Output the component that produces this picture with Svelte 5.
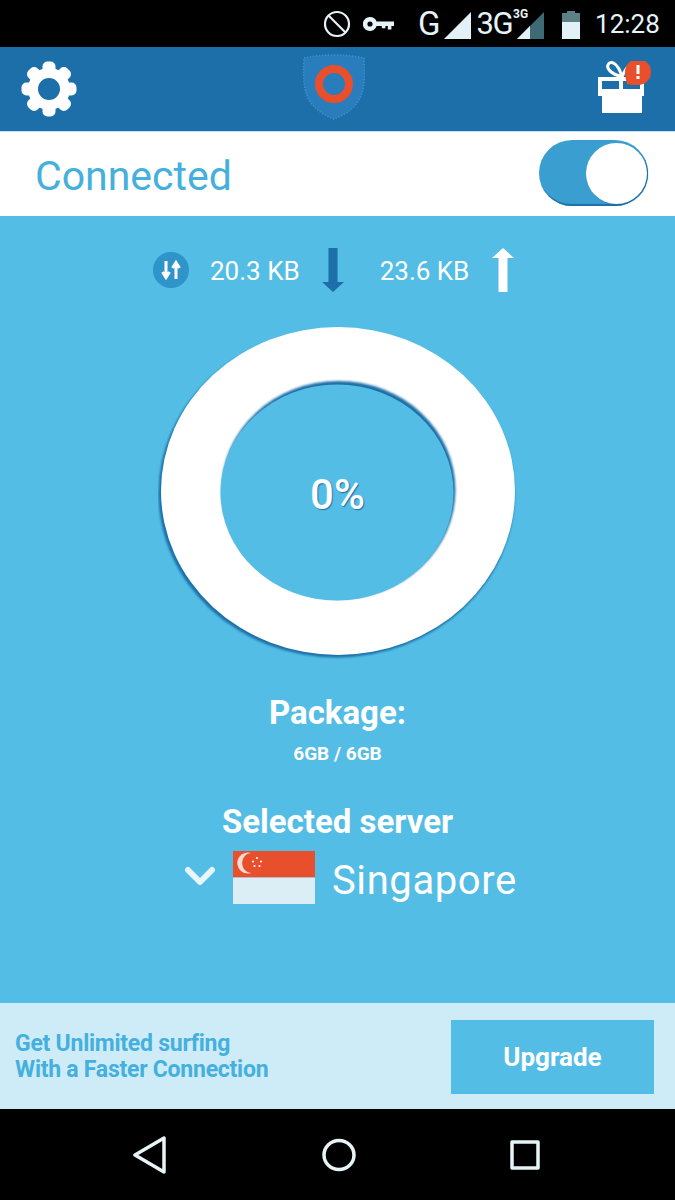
<script>
  const promo = ['Get Unlimited surfing', 'With a Faster Connection']
  const stars = [[24, 7], [20, 10.5], [28, 10.5], [21.5, 15], [26.5, 15]]

  // gear teeth, drawn round the centre of a 56 box
  const teeth = [0, 45, 90, 135, 180, 225, 270, 315]
</script>

<div class="phone">
  <div class="status">
    <svg class="no" width="28" height="28" viewBox="0 0 28 28" fill="none" stroke="#e6f4f8" stroke-width="2.2">
      <circle cx="14" cy="14" r="12" />
      <path d="M5.5 5.5l17 17" />
    </svg>
    <svg class="key" width="31" height="16" viewBox="0 0 31 16" fill="#e6f4f8">
      <path fill-rule="evenodd" d="M7 1a7 7 0 0 1 6.6 4.5H31v4.4h-2.6v3.6h-3.6V9.9h-2.4v2.4h-3.6V9.9h-5.2A7 7 0 1 1 7 1zm0 4.4a2.6 2.6 0 1 0 0 5.2 2.6 2.6 0 0 0 0-5.2z" />
    </svg>
    <span class="net g">G</span>
    <svg class="tri" width="27" height="27" viewBox="0 0 27 27"><path d="M0 27L27 0v27z" fill="#e2f1f6" /></svg>
    <span class="net three">3G</span>
    <span class="sup">3G</span>
    <svg class="tri two" width="27" height="27" viewBox="0 0 27 27">
      <path d="M0 27L27 0v27z" fill="#3d6a75" />
      <path d="M0 27L13 14v13z" fill="#e2f1f6" />
    </svg>
    <svg class="batt" width="18" height="28" viewBox="0 0 18 28">
      <path d="M5 0h8v2h5v9H0V2h5z" fill="#5d8087" />
      <path d="M0 11h18v17H0z" fill="#e2f1f6" />
    </svg>
    <span class="time">12:28</span>
  </div>

  <header>
    <svg class="gear" width="56" height="56" viewBox="0 0 56 56">
      <g fill="#fff">
        {#each teeth as a}
          <rect x="21.5" y="0.5" width="13" height="14" rx="5" transform="rotate({a} 28 28)" />
        {/each}
      </g>
      <circle cx="28" cy="28" r="16" fill="none" stroke="#fff" stroke-width="10" />
    </svg>
    <svg class="logo" width="64" height="66" viewBox="0 0 64 66">
      <path d="M2 4C20 0 44 0 62 4c1 20 1 34-7 45-6 8-15 13-23 16C24 62 15 57 9 49 1 38 1 24 2 4z" fill="#2a7dbd" stroke="#3f8fc9" stroke-width="1.5" stroke-dasharray="1.5 1.5" />
      <circle cx="32" cy="30" r="15" fill="none" stroke="#e84f2c" stroke-width="8" />
    </svg>
    <svg class="gift" width="56" height="54" viewBox="0 0 56 54">
      <path d="M26 16C17 14 10 8 12 4c2-5 10-3 14 12zM26 16c2-5 4-10 8-12" fill="none" stroke="#fff" stroke-width="3" />
      <path fill-rule="evenodd" d="M2 16h46v19H2zM6 20v8h17v-8zM27 20v8h17v-8z" fill="#fff" />
      <path d="M6 35h40v17H6z" fill="#fff" />
      <path d="M31 23c-1-4-2-8-2-12a13 13 0 1 1 13 13c-4 0-8 0-11-1z" fill="#e84f2c" />
      <path d="M40.500 4h3v9h-3zM40.500 15h3v3h-3z" fill="#fff" />
    </svg>
  </header>

  <div class="connected">
    <span>Connected</span>
    <div class="toggle"><div class="thumb"></div></div>
  </div>

  <main>
    <div class="stats">
      <svg class="swap" width="36" height="36" viewBox="0 0 36 36">
        <circle cx="18" cy="18" r="18" fill="#2f94c9" />
        <path d="M13 9v14M9.500 20l3.500 5.500 3.500-5.500M23 27V13M19.500 16l3.500-5.500 3.500 5.500" fill="none" stroke="#fff" stroke-width="3" />
      </svg>
      <span class="kb first">20.3 KB</span>
      <svg class="arrow down" width="22" height="44" viewBox="0 0 22 44">
        <path d="M6.500 0h9v34H22L11 44 0 34h6.500z" fill="#1c6fa8" />
      </svg>
      <span class="kb second">23.6 KB</span>
      <svg class="arrow up" width="22" height="44" viewBox="0 0 22 44">
        <path d="M6.500 44h9V10H22L11 0 0 10h6.500z" fill="#fff" />
      </svg>
    </div>

    <div class="ring">
      <svg width="360" height="334" viewBox="0 0 360 334">
        <defs>
          <filter id="soft" x="-5%" y="-5%" width="110%" height="110%"><feGaussianBlur stdDeviation="0.8" /></filter>
        </defs>
        <ellipse cx="178.500" cy="168.500" rx="178" ry="164" fill="#1c6fa8" filter="url(#soft)" />
        <ellipse cx="180" cy="166" rx="177" ry="164" fill="#fff" />
        <ellipse cx="180.500" cy="165" rx="117" ry="109" fill="#1c6fa8" filter="url(#soft)" />
        <ellipse cx="179" cy="167.500" rx="116.500" ry="108" fill="#53bde5" />
      </svg>
      <span class="pct">0%</span>
    </div>

    <div class="package">Package:</div>
    <div class="quota">6GB / 6GB</div>

    <div class="selected">Selected server</div>
    <div class="server">
      <svg class="chev" width="32" height="20" viewBox="0 0 32 20">
        <path d="M4 4l12 12L28 4" fill="none" stroke="#e8f6fb" stroke-width="6" stroke-linecap="round" stroke-linejoin="round" />
      </svg>
      <svg class="flag" width="82" height="53" viewBox="0 0 82 53">
        <rect width="82" height="26.500" fill="#e84f2c" />
        <rect y="26.500" width="82" height="26.500" fill="#dceef5" />
        <path d="M18 2a10.500 10.500 0 1 0 0 20 8 9 0 1 1 0-20z" fill="#f6dcd4" />
        {#each stars as s}
          <circle cx={s[0]} cy={s[1]} r="1.100" fill="#fff" />
        {/each}
      </svg>
      <span>Singapore</span>
    </div>
  </main>

  <div class="promo">
    <div class="pitch">
      {#each promo as line}
        <div>{line}</div>
      {/each}
    </div>
    <button>Upgrade</button>
  </div>

  <nav>
    <svg width="34" height="38" viewBox="0 0 34 38" fill="none" stroke="#e6f4f8" stroke-width="3.500" stroke-linejoin="round">
      <path d="M31 2v34L2 19z" />
    </svg>
    <svg width="34" height="34" viewBox="0 0 34 34" fill="none" stroke="#e6f4f8" stroke-width="3.500">
      <ellipse cx="17" cy="17" rx="15" ry="14.500" />
    </svg>
    <svg width="30" height="30" viewBox="0 0 30 30" fill="none" stroke="#e6f4f8" stroke-width="3.500" stroke-linejoin="round">
      <rect x="2" y="2" width="26" height="26" />
    </svg>
  </nav>
</div>

<style>
  :global(body) {
    background: #000;
  }

  .phone {
    width: 675px;
    height: 1200px;
    display: flex;
    flex-direction: column;
    font-family: Roboto, "Liberation Sans", sans-serif;
    overflow: hidden;
  }

  .status {
    height: 47px;
    background: #000;
    color: #e6f4f8;
    display: flex;
    align-items: center;
    padding-left: 323px;
    flex: none;
  }

  .status svg {
    flex: none;
  }

  .key {
    margin-left: 12px;
  }

  .net {
    font-size: 33px;
    line-height: 47px;
  }

  .g {
    margin-left: 24px;
  }

  .three {
    margin-left: 5px;
    font-size: 31px;
    letter-spacing: -1.5px;
  }

  .sup {
    font-size: 12px;
    font-weight: 700;
    margin: -20px 0 0 1px;
    width: 16px;
  }

  .status .tri {
    margin: 3px 0 0 4px;
  }

  .status .two {
    margin-left: -12px;
  }

  .status .batt {
    margin: 2px 0 0 18px;
  }

  .time {
    font-size: 26px;
    margin-left: 15px;
  }

  header {
    height: 84px;
    background: #1c6fa8;
    flex: none;
    display: flex;
    align-items: center;
    justify-content: space-between;
    padding: 0 23px 0 21px;
    position: relative;
  }

  .logo {
    margin: 0 6px 5px 0;
  }

  .gift {
    margin-bottom: 2px;
  }

  .connected {
    height: 84px;
    background: #fff;
    border-top: 1px solid #bfe6f5;
    flex: none;
    display: flex;
    align-items: center;
    justify-content: space-between;
    padding: 0 27px 0 35px;
    color: #45b0dd;
    font-size: 41px;
  }

  .connected span {
    margin-top: 3px;
  }

  .toggle {
    width: 109px;
    height: 66px;
    box-sizing: border-box;
    background: #3a9fd0;
    border-radius: 33px;
    display: flex;
    align-items: center;
    justify-content: flex-end;
    padding-right: 1px;
    box-shadow: inset -1px -2px 1px #1c6fa8;
    margin-bottom: 2px;
  }

  .thumb {
    width: 61px;
    height: 61px;
    border-radius: 50%;
    background: #fff;
    box-shadow: 1px 1px 1px #1c6fa8;
  }

  main {
    flex: 1;
    background: #53bde5;
    color: #fff;
    display: flex;
    flex-direction: column;
    align-items: center;
  }

  .stats {
    display: flex;
    align-items: center;
    width: 675px;
    height: 44px;
    margin-top: 32px;
    padding-left: 153px;
    box-sizing: border-box;
  }

  .swap {
    flex: none;
  }

  .kb {
    font-size: 26px;
    white-space: nowrap;
    margin-top: 2px;
  }

  .first {
    margin-left: 21px;
  }

  .down {
    margin-left: 22px;
  }

  .second {
    margin-left: 36px;
  }

  .up {
    margin-left: 23px;
  }

  .ring {
    position: relative;
    width: 360px;
    height: 334px;
    margin-top: 33px;
  }

  .ring svg {
    display: block;
  }

  .pct {
    position: absolute;
    left: 0;
    right: 0;
    top: 147px;
    line-height: 46px;
    text-align: center;
    font-size: 42px;
    font-weight: 500;
    text-shadow: 1px 1px 1px #1c6fa8;
  }

  .package {
    margin-top: 36px;
    font-size: 33px;
    font-weight: 700;
    line-height: 36px;
  }

  .quota {
    margin-top: 13px;
    font-size: 19px;
    font-weight: 700;
    line-height: 20px;
  }

  .selected {
    margin-top: 40px;
    font-size: 33px;
    font-weight: 700;
    line-height: 36px;
  }

  .server {
    display: flex;
    align-items: center;
    width: 675px;
    box-sizing: border-box;
    padding-left: 184px;
    margin-top: 11px;
    font-size: 40px;
  }

  .chev {
    flex: none;
    margin-bottom: 4px;
  }

  .flag {
    flex: none;
    margin-left: 17px;
  }

  .server span {
    margin: 6px 0 0 17px;
    letter-spacing: 0.6px;
  }

  .promo {
    height: 106px;
    flex: none;
    background: #cdecf8;
    display: flex;
    align-items: center;
    justify-content: space-between;
    padding: 0 21px 0 15px;
  }

  .pitch {
    color: #45b0dd;
    font-size: 23px;
    font-weight: 700;
    line-height: 26px;
    letter-spacing: -0.25px;
    margin-top: 2px;
  }

  button {
    width: 203px;
    height: 74px;
    border: none;
    background: #53bde5;
    color: #fff;
    font-family: inherit;
    font-size: 26px;
    font-weight: 700;
    padding: 0;
    margin-top: 1px;
  }

  nav {
    height: 91px;
    flex: none;
    background: #000;
    display: flex;
    align-items: center;
    padding: 0 135px 0 133px;
    justify-content: space-between;
  }
</style>
